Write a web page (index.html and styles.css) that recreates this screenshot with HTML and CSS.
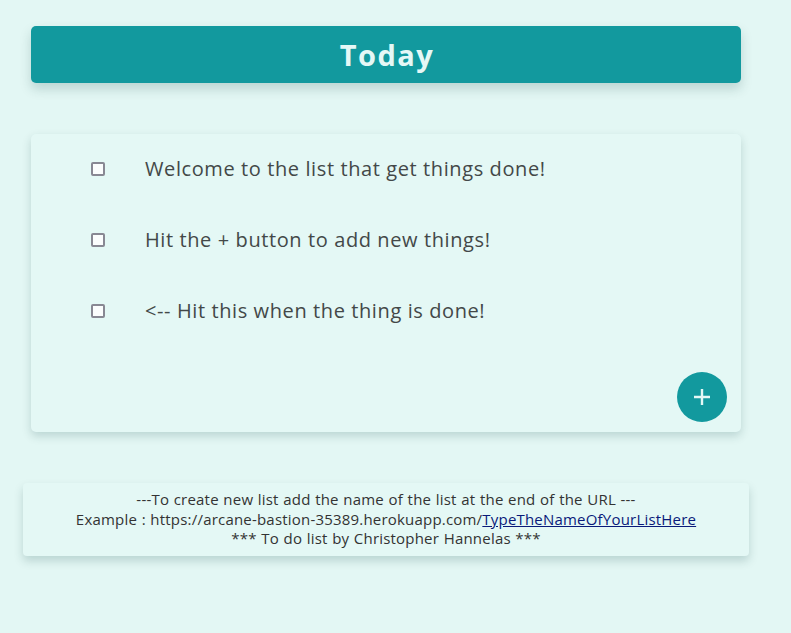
FILE: index.html
```html
<!DOCTYPE html>
<html>
<head>
<meta charset="utf-8">
<link rel="stylesheet" href="styles.css">
</head>
<body>
<div class="page">
  <header class="title-box"><h1>Today</h1></header>
  <section class="card">
    <div class="item"><span class="box"></span><span class="label">Welcome to the list that get things done!</span></div>
    <div class="item"><span class="box"></span><span class="label">Hit the + button to add new things!</span></div>
    <div class="item"><span class="box"></span><span class="label">&lt;-- Hit this when the thing is done!</span></div>
    <div class="add-row"><button class="add" aria-label="add"><svg width="20" height="20" viewBox="0 0 20 20"><path d="M10 2v16M2 10h16" stroke="#e4f8f6" stroke-width="2.4"/></svg></button></div>
  </section>
  <footer class="foot">
    <p>---To create new list add the name of the list at the end of the URL ---</p>
    <p>Example : https://arcane-bastion-35389.herokuapp.com/<a href="#">TypeTheNameOfYourListHere</a></p>
    <p>*** To do list by Christopher Hannelas ***</p>
  </footer>
</div>
</body>
</html>
```
FILE: styles.css
```css
html, body { margin: 0; padding: 0; }
body {
  background: #e3f7f4;
  font-family: "Open Sans", sans-serif;
  color: #444;
  width: 791px;
  height: 633px;
  overflow: hidden;
}
.page {
  padding: 26px 0 0 0;
  display: flex;
  flex-direction: column;
}
.title-box {
  margin: 0 50px 0 31px;
  height: 57px;
  background: #12999e;
  border-radius: 5px;
  box-shadow: 0 6px 12px rgba(0,60,60,0.18);
  display: flex;
  align-items: center;
  justify-content: center;
}
.title-box h1 {
  margin: 0;
  color: #e5f8f6;
  font-family: "Open Sans", sans-serif;
  font-weight: 700;
  font-size: 29px;
  letter-spacing: 1.5px;
  position: relative;
  left: 1px;
}
.card {
  margin: 51px 50px 0 31px;
  height: 298px;
  box-sizing: border-box;
  background: #e4f8f5;
  border-radius: 5px;
  box-shadow: 0 4px 10px rgba(0,60,60,0.18);
  padding: 15px 14px 10px 60px;
  display: flex;
  flex-direction: column;
}
.item {
  display: flex;
  align-items: center;
  height: 71px;
}
.box {
  width: 10px;
  height: 10px;
  border: 2px solid #888893;
  border-radius: 2px;
  background: #fbfdfd;
  flex: none;
  margin-right: 40px;
  position: relative;
  top: -16px;
}
.label {
  font-size: 20px;
  letter-spacing: 0.6px;
  color: #434848;
  position: relative;
  top: -16px;
}
.add-row {
  margin-top: auto;
  display: flex;
  justify-content: flex-end;
}
.add {
  width: 50px;
  height: 50px;
  border-radius: 50%;
  border: none;
  background: #12999e;
  display: flex;
  align-items: center;
  justify-content: center;
  padding: 0;
}
.foot {
  margin: 51px 42px 0 23px;
  background: #e4f8f5;
  border-radius: 4px;
  box-shadow: 0 5px 10px rgba(0,60,60,0.18);
  padding: 7px 0 7px;
  text-align: center;
  font-size: 15px;
  letter-spacing: 0.2px;
  word-spacing: 0.5px;
  line-height: 19.5px;
  color: #333;
}
.foot p { margin: 0; }
.foot a { color: #0a1a7a; }
```
